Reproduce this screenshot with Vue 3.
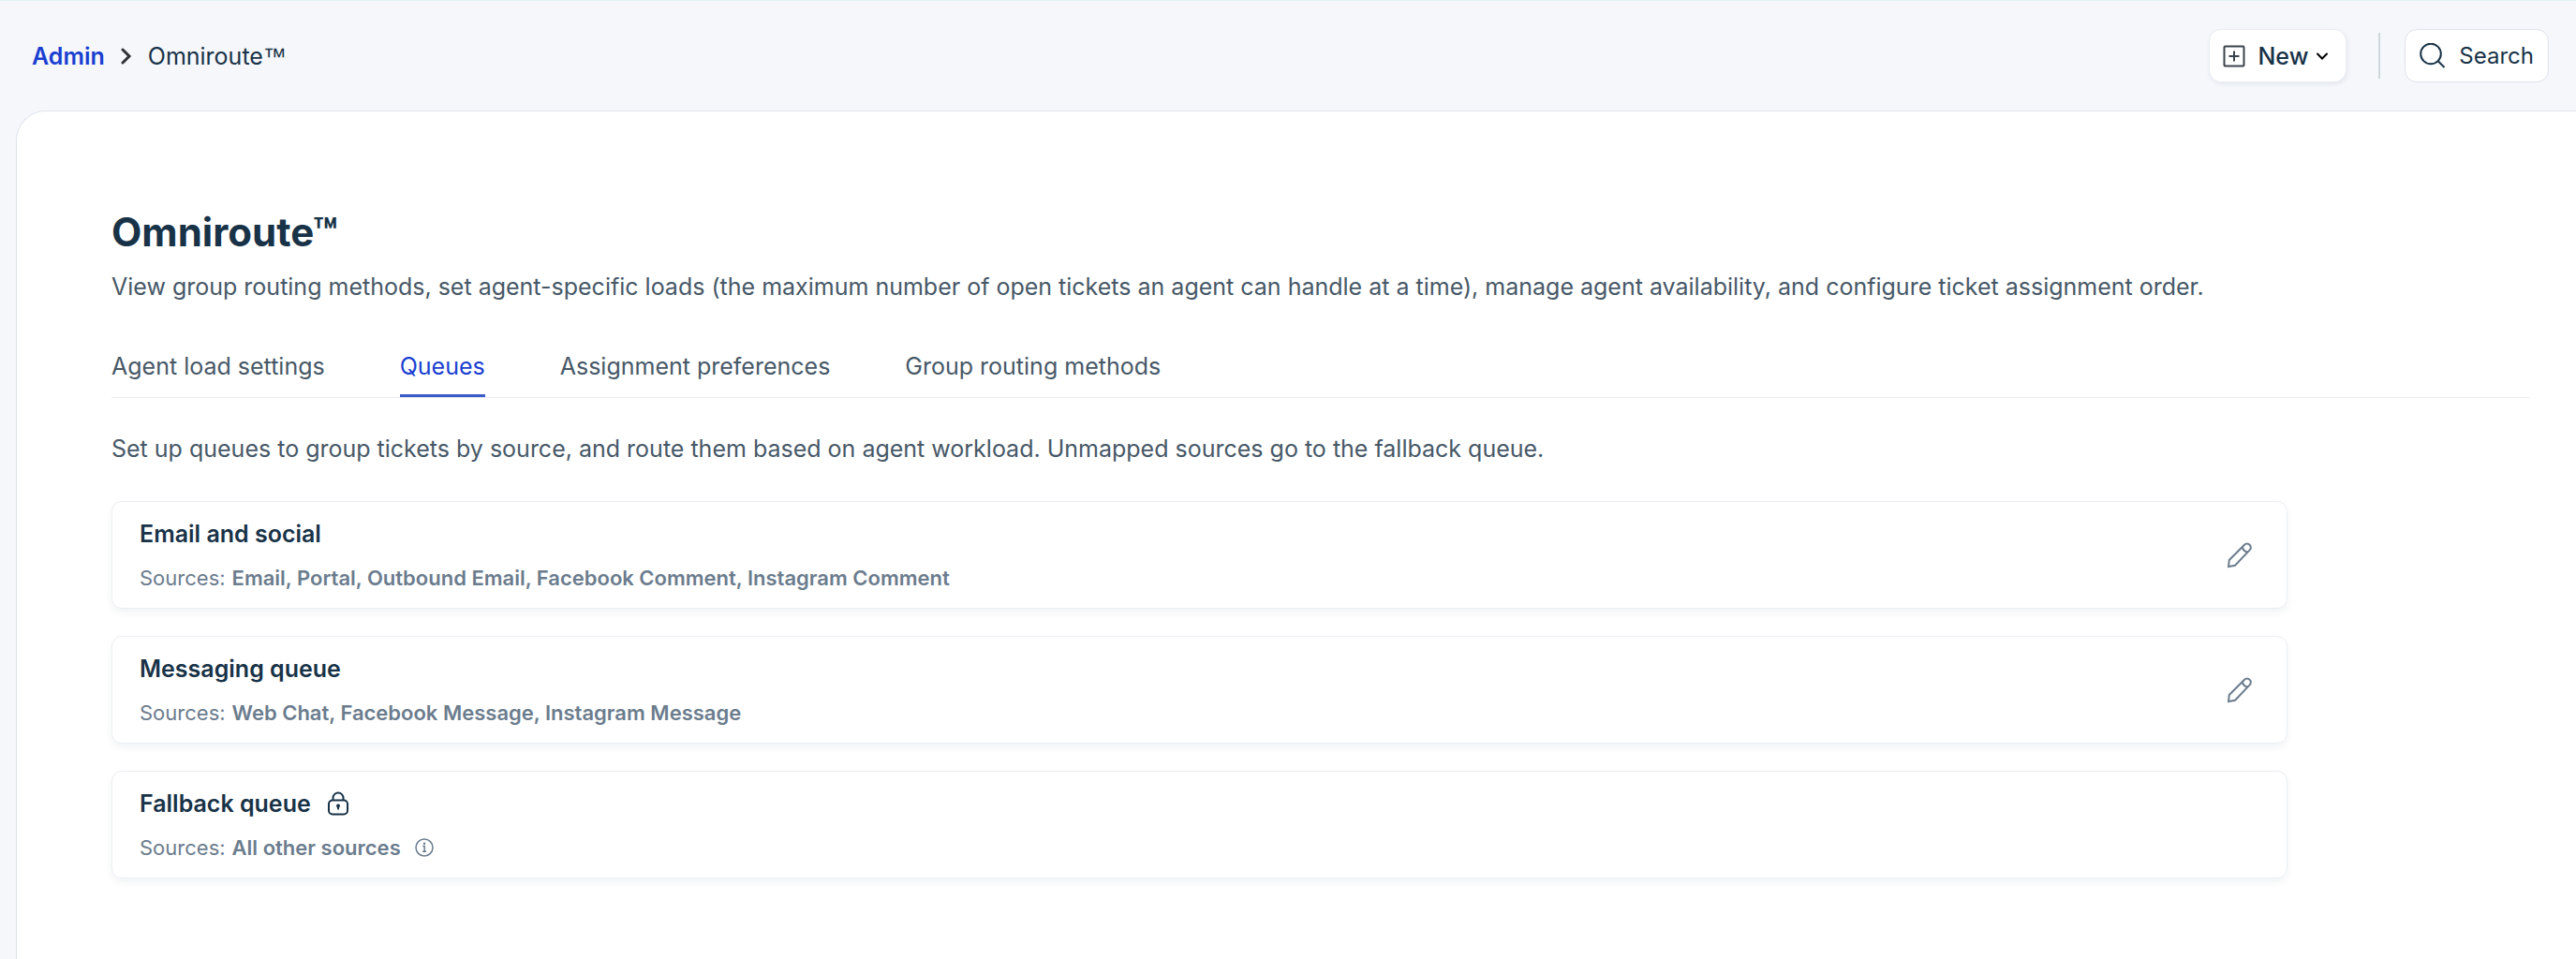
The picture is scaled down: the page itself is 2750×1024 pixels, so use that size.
<template>
    <div class="app-shell">
        <header class="top-bar">
            <nav class="breadcrumb" aria-label="Breadcrumb">
                <a href="#" class="breadcrumb-link">Admin</a>
                <svg class="breadcrumb-arrow" viewBox="0 0 12 18" aria-hidden="true">
                    <path d="M2 2l7 7-7 7" />
                </svg>
                <span>Omniroute<span class="trademark">™</span></span>
            </nav>
            <div class="top-actions">
                <button type="button" class="top-btn new-btn">
                    <svg class="new-icon" viewBox="0 0 24 24" aria-hidden="true">
                        <rect x="1.5" y="1.5" width="21" height="21" rx="1" />
                        <path d="M12 6.5v11M6.5 12h11" />
                    </svg>
                    <span>New</span>
                    <svg class="caret-icon" viewBox="0 0 12 8" aria-hidden="true">
                        <path d="M1 1.5l5 5 5-5" />
                    </svg>
                </button>
                <span class="divider"></span>
                <button type="button" class="top-btn">
                    <svg class="search-icon" viewBox="0 0 28 28" aria-hidden="true">
                        <circle cx="12" cy="11.5" r="10.8" />
                        <path d="M19.5 19l7 7" />
                    </svg>
                    <span>Search</span>
                </button>
            </div>
        </header>

        <main class="panel">
            <h1 class="title">Omniroute™</h1>
            <p class="text">
                View group routing methods, set agent-specific loads (the maximum number of open tickets an agent can handle at a time), manage agent availability, and configure ticket assignment order.
            </p>

            <div class="tabs" role="tablist">
                <button
                    v-for="tab in tabs"
                    :key="tab"
                    type="button"
                    role="tab"
                    class="tab"
                    :class="{ active: tab === activeTab }"
                    :aria-selected="tab === activeTab"
                    @click="activeTab = tab"
                >
                    {{ tab }}
                </button>
            </div>

            <p class="text">
                Set up queues to group tickets by source, and route them based on agent workload. Unmapped sources go to the fallback queue.
            </p>

            <ul class="queue-list">
                <li v-for="queue in queues" :key="queue.name" class="queue-card">
                    <div>
                        <h2 class="queue-name">
                            {{ queue.name }}
                            <svg v-if="queue.locked" class="lock-icon" viewBox="0 0 22 26" aria-hidden="true">
                                <rect x="1" y="9.5" width="20" height="15" rx="4" />
                                <path d="M5.5 9.5V7a5.5 5.5 0 0 1 11 0v2.5" />
                                <path class="keyhole" d="M11 13.5a2 2 0 0 1 1.2 3.6l-.4 2.4h-1.6l-.4-2.4A2 2 0 0 1 11 13.5z" />
                            </svg>
                        </h2>
                        <div class="queue-sources">
                            <span>Sources:</span>
                            <strong>{{ queue.sources.join(', ') }}</strong>
                            <svg v-if="queue.locked" class="info-icon" viewBox="0 0 20 20" aria-hidden="true">
                                <circle cx="10" cy="10" r="9" />
                                <path d="M8.200 8.500h2v5.500M8 14.200h4.200" />
                                <circle class="info-dot" cx="10" cy="5.7" r="1.2" />
                            </svg>
                        </div>
                    </div>
                    <button v-if="!queue.locked" type="button" class="edit-btn" :aria-label="'Edit ' + queue.name">
                        <svg viewBox="0 0 28 28" aria-hidden="true">
                            <path d="M2 26l.8-7L19 2.8a3.8 3.8 0 0 1 5.6 0 3.8 3.8 0 0 1 0 5.600L9 24.8z" />
                            <path d="M16.800 5c.6 3.200 2.400 5 5.600 5.600" />
                        </svg>
                    </button>
                </li>
            </ul>
        </main>
    </div>
</template>

<script setup>
import { ref } from 'vue';

const tabs = ['Agent load settings', 'Queues', 'Assignment preferences', 'Group routing methods'];
const activeTab = ref('Queues');

const queues = [
    {
        name: 'Email and social',
        sources: ['Email', 'Portal', 'Outbound Email', 'Facebook Comment', 'Instagram Comment']
    },
    {
        name: 'Messaging queue',
        sources: ['Web Chat', 'Facebook Message', 'Instagram Message']
    },
    {
        name: 'Fallback queue',
        sources: ['All other sources'],
        locked: true
    }
];
</script>

<style>
body {
    margin: 0;
    background: #f5f7fb;
}
</style>

<style scoped>
.app-shell {
    display: flex;
    flex-direction: column;
    min-height: 100vh;
    box-sizing: border-box;
    border-top: 1px solid #e3f2f6;
    background: #f5f7fb;
    color: #183247;
    font-family: Inter, "Liberation Sans", sans-serif;
    font-size: 25px;
    line-height: 32px;
}

button {
    font: inherit;
    color: inherit;
    cursor: pointer;
}

svg {
    flex: none;
    fill: none;
    stroke: currentColor;
    stroke-width: 2;
}

.top-bar {
    display: flex;
    justify-content: space-between;
    align-items: center;
    height: 117px;
    padding: 0 29px 0 34px;
}

.breadcrumb {
    display: flex;
    align-items: center;
    gap: 17px;
}

.breadcrumb-link {
    color: #1a3fd0;
    font-weight: 600;
    text-decoration: none;
}

.breadcrumb-arrow {
    width: 12px;
    height: 18px;
    color: #2f3337;
    stroke-width: 3;
    stroke-linecap: round;
}

.trademark {
    font-family: "Liberation Sans", sans-serif;
}

.top-actions {
    display: flex;
    align-items: center;
}

.top-btn {
    display: flex;
    align-items: center;
    height: 57px;
    padding: 0 15px;
    border: 1px solid #dfe3ea;
    border-radius: 13px;
    background: #fff;
    font-size: 24px;
}

.new-btn {
    padding: 0 19px 0 14px;
    border-color: #ebeef3;
    box-shadow: 1px 2px 4px rgba(24, 50, 71, 0.08);
    font-size: 25px;
    font-weight: 500;
}

.new-icon {
    width: 24px;
    height: 24px;
    margin-right: 13px;
    color: #3a424b;
}

.caret-icon {
    width: 12px;
    height: 8px;
    margin-left: 9px;
    color: #000;
    stroke-linecap: round;
}

.divider {
    width: 2px;
    height: 49px;
    margin: 0 26px 0 34px;
    background: #cfd7df;
}

.search-icon {
    width: 28px;
    height: 28px;
    margin-right: 14px;
}

.panel {
    flex: 1;
    margin-left: 17px;
    padding: 101px 50px 60px 101px;
    border: 1px solid #dfe3ea;
    border-width: 1px 0 0 1px;
    border-top-left-radius: 32px;
    background: #fff;
}

.title {
    margin: 0 0 14px;
    font-size: 42px;
    font-weight: 700;
    line-height: 56px;
}

.text {
    margin: 0;
    color: #475867;
}

.tabs {
    display: flex;
    gap: 80px;
    margin: 45px 0 38px;
    border-bottom: 1px solid #e6ebf3;
}

.tab {
    padding: 8px 0 14px;
    border: 0;
    border-bottom: 3px solid transparent;
    background: none;
    color: #475867;
}

.tab.active {
    border-bottom-color: #3a5bc7;
    color: #1a3fd0;
}

.queue-list {
    display: flex;
    flex-direction: column;
    gap: 29px;
    width: 90%;
    margin: 40px 0 0;
    padding: 0;
    list-style: none;
}

.queue-card {
    display: flex;
    justify-content: space-between;
    align-items: center;
    padding: 18px 36px 17px 29px;
    border: 1px solid #ebeef2;
    border-radius: 11px;
    box-shadow: 0 4px 8px rgba(24, 50, 71, 0.06);
}

.queue-name {
    display: flex;
    align-items: center;
    gap: 18px;
    margin: 0 0 16px;
    font-size: 25px;
    font-weight: 600;
    line-height: 32px;
}

.lock-icon {
    width: 22px;
    height: 26px;
}

.keyhole,
.info-dot {
    fill: currentColor;
    stroke: none;
}

.queue-sources {
    display: flex;
    align-items: center;
    gap: 7px;
    color: #6b7c8d;
    font-size: 22px;
    line-height: 30px;
}

.queue-sources strong {
    font-weight: 600;
}

.info-icon {
    width: 20px;
    height: 20px;
    margin-left: 8px;
    stroke-width: 1.5;
}

.edit-btn {
    display: flex;
    padding: 0;
    border: 0;
    background: none;
    color: #6b7c8d;
}

.edit-btn svg {
    width: 28px;
    height: 28px;
}
</style>
